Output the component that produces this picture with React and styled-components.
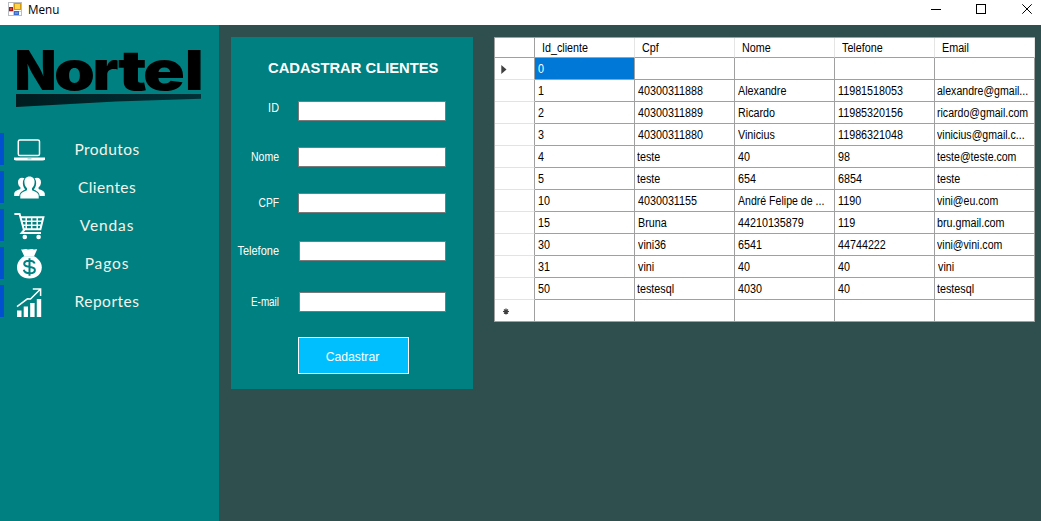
import React from 'react';
import styled, { createGlobalStyle } from 'styled-components';

const GlobalStyle = createGlobalStyle`
  * { box-sizing: border-box; }
  body { margin: 0; overflow: hidden; background: #2f4f4f; font-family: "Liberation Sans", Arial, sans-serif; }
`;

const Window = styled.div`
  display: flex;
  flex-direction: column;
  width: 1041px;
  height: 521px;
  background: #2f4f4f;
`;

const TitleBar = styled.header`
  display: flex;
  flex: none;
  height: 25px;
  padding-left: 8px;
  background: #fff;
`;

const AppIcon = styled.svg`
  margin-top: 2px;
  flex: none;
`;

const Title = styled.span`
  margin-left: 6px;
  flex: 1;
  font: 11.7px/19px "Open Sans", sans-serif;
  color: #000;
`;

const WindowControls = styled.svg`
  flex: none;
`;

const Body = styled.div`
  display: flex;
  flex: 1;
  align-items: flex-start;
`;

const Sidebar = styled.nav`
  width: 219px;
  height: 496px;
  flex: none;
  background: #008080;
`;

const Logo = styled.svg`
  display: block;
`;

const Menu = styled.div`
  display: flex;
  flex-direction: column;
  gap: 6px;
`;

const MenuItem = styled.div`
  display: flex;
  align-items: center;
  height: 32px;
  border-left: 4px solid #0050d0;
`;

const MenuIcon = styled.svg`
  margin-left: 9px;
  flex: none;
`;

const MenuLabel = styled.span`
  width: 130px;
  margin-left: -4px;
  text-align: center;
  font: 15.5px/32px Lato, sans-serif;
  letter-spacing: ${(p) => p.$spacing}px;
  color: #f4f4ec;
`;

const Panel = styled.section`
  width: 242px;
  height: 352px;
  flex: none;
  margin: 12px 0 0 12px;
  padding-top: 22px;
  background: #008080;
`;

const PanelTitle = styled.h1`
  margin: 0 0 24px 37px;
  font-size: 14.75px;
  line-height: 18px;
  font-weight: bold;
  color: #fff;
  white-space: nowrap;
`;

const Field = styled.label`
  display: flex;
  height: 20px;
  margin-bottom: ${(p) => p.$gap}px;
  padding-right: 27px;
`;

const FieldLabel = styled.span`
  flex: 1;
  margin-top: ${(p) => p.$shift}px;
  margin-right: ${(p) => p.$space}px;
  text-align: right;
  font-size: 12.5px;
  line-height: 20px;
  color: #fff;
  transform: scaleX(${(p) => p.$stretch});
  transform-origin: right;
`;

const Input = styled.input`
  width: ${(p) => p.$width}px;
  height: 20px;
  padding: 0 3px;
  border: 1px solid #7a7a7a;
  border-radius: 0;
  background: #fff;
  outline: none;
`;

const SubmitButton = styled.button`
  display: block;
  width: 111px;
  height: 37px;
  margin-left: 67px;
  padding: 3px 2px 0 0;
  border: 1px solid #fff;
  background: #00bfff;
  color: #fff;
  font: 12.2px "Liberation Sans", Arial, sans-serif;
`;

const Grid = styled.table`
  width: 541px;
  flex: none;
  margin: 12px 0 0 21px;
  table-layout: fixed;
  border-collapse: separate;
  border-spacing: 0;
  border: 1px solid #a0a0a0;
  border-width: 1px 0 0 1px;
  background: #fff;
`;

const HeaderCell = styled.th`
  width: ${(p) => p.$width}px;
  height: 20px;
  padding: 1px 0 0 7px;
  border-bottom: 1px solid #a0a0a0;
  border-right: 1px solid ${(p) => (p.$dark ? '#a0a0a0' : '#e5e5e5')};
  text-align: left;
  font-weight: normal;
`;

const RowHeader = styled.td`
  height: 22px;
  padding: 0 0 0 5px;
  border-right: 1px solid #a0a0a0;
  border-bottom: 1px solid ${(p) => (p.$last ? '#a0a0a0' : '#e3e3e3')};
`;

const Marker = styled.svg`
  display: block;
`;

const Cell = styled.td`
  height: 22px;
  padding: 1px 0 0 3px;
  border-right: 1px solid #a0a0a0;
  border-bottom: 1px solid #a0a0a0;
  background: ${(p) => (p.$selected ? '#0078d7' : '#fff')};
  color: ${(p) => (p.$selected ? '#fff' : '#000')};
`;

const CellText = styled.span`
  display: block;
  width: 108px;
  margin-left: ${(p) => (p.$tight ? -1 : 0)}px;
  font-size: 12.5px;
  line-height: 18px;
  white-space: nowrap;
  transform: scaleX(${(p) => (p.$word ? 0.845 : 0.86)});
  transform-origin: left;
`;

const icons = {
  laptop: (
    <g>
      <rect x="5.3" y="6.9" width="21.2" height="15.6" rx="1.6" fill="none" stroke="#fff" strokeWidth="1.5" />
      <path d="M1 24.6H32V26.3Q31.4 27.6 29.6 27.6H3.4Q1.6 27.6 1 26.3Z" fill="#fff" />
      <path d="M14.5 25.4H18.5V26.3H14.5Z" fill="#008080" opacity=".45" />
    </g>
  ),
  people: (
    <g fill="#fff">
      <path d="M11.5 7.2C8 5.6 4.8 7.5 5 11.5C5.1 13.7 6.1 15.5 7.4 16.3V18C4.5 19.1 1.5 20.2 1.2 22.5V25H6.3C6.8 21.3 9.5 20 12.2 18.6C10.3 16.3 9.5 13.5 10 10.3C10.2 9 10.7 8.1 11.5 7.2Z" />
      <path d="M21.5 7.2C25 5.6 28.2 7.5 28 11.5C27.9 13.7 26.9 15.5 25.6 16.3V18C28.5 19.1 31.5 20.2 31.8 22.5V25H26.7C26.2 21.3 23.5 20 20.8 18.6C22.7 16.3 23.5 13.5 23 10.3C22.8 9 22.3 8.1 21.5 7.2Z" />
      <path d="M16.5 5.6C13.2 5.6 11.2 7.9 11.4 11.3C11.5 14 12.5 16 14 17.2V19.3C11 20.7 7.5 21.7 7.3 24.6V27.6H25.7V24.6C25.5 21.7 22 20.7 19 19.3V17.2C20.5 16 21.5 14 21.6 11.3C21.8 7.9 19.8 5.6 16.5 5.6Z" />
    </g>
  ),
  cart: (
    <g fill="none" stroke="#fff">
      <path d="M1.4 5.1H6.6L11 21.2L8.6 24.1H28" strokeWidth="2" />
      <path d="M7.2 8.2H30.4L27.4 20.3H10.6" strokeWidth="2" />
      <path d="M8.3 12.2H29.3M9.4 16.2H28.3M13.2 8V20M18.7 8V20M24.2 8V20" strokeWidth="1.5" />
      <circle cx="11.8" cy="28" r="2.3" fill="#fff" stroke="none" />
      <circle cx="25.6" cy="28" r="2.3" fill="#fff" stroke="none" />
    </g>
  ),
  bag: (
    <g>
      <path d="M8 2.2C10.5 3 12 1.3 14 2.2C16 3.1 18 1.4 20 2.2C21.4 2.9 22.8 2.3 24.2 2.3L20.9 9.6H11.4Z" fill="#fff" />
      <path d="M11 9.3H21.2C25.7 12 28.8 15.7 28.8 20.2C28.8 27.2 23.5 31.4 16.4 31.4C9.2 31.4 4 27.2 4 20.2C4 15.7 6.8 12 11 9.3Z" fill="#fff" />
      <path d="M21.7 16.5C20.9 14.4 19 13.7 16.3 13.7C13.1 13.7 11.2 14.9 11.2 16.9C11.2 21.1 21.9 18.3 21.9 23C21.9 25.1 19.8 26.3 16.7 26.3C13.5 26.3 11.3 25 10.8 22.8M16.5 11.2V28.7" fill="none" stroke="#008080" strokeWidth="2" />
    </g>
  ),
  chart: (
    <g>
      <path d="M4 25.6H8.5V32H4ZM10.7 21.6H15V32H10.7ZM17.2 18H21.6V32H17.2ZM23.8 14H28.2V32H23.8Z" fill="#fff" />
      <path d="M4 21.7L14.4 13.8L17.5 14L26.8 4.7M19.8 3.9H27.6V11" fill="none" stroke="#fff" strokeWidth="1.5" />
    </g>
  ),
};

const menu = [
  { label: 'Produtos', icon: 'laptop', spacing: 0.45 },
  { label: 'Clientes', icon: 'people', spacing: 0.4 },
  { label: 'Vendas', icon: 'cart', spacing: 0.9 },
  { label: 'Pagos', icon: 'bag', spacing: 0.9 },
  { label: 'Reportes', icon: 'chart', spacing: 0.5 },
];

const logoLetters = [
  { char: 'N', x: 14.5, width: 42 },
  { char: 'o', x: 54, width: 41 },
  { char: 'r', x: 92.5, width: 26 },
  { char: 't', x: 118, width: 29 },
  { char: 'e', x: 143, width: 42 },
  { char: 'l', x: 184.8, width: 19 },
];

const fields = [
  { label: 'ID', gap: 26, shift: -3, width: 148, stretch: 0.87 },
  { label: 'Nome', gap: 26, shift: 0, width: 148, stretch: 0.84 },
  { label: 'CPF', gap: 28, shift: 0, width: 148, stretch: 0.82 },
  { label: 'Telefone', gap: 31, shift: 0, width: 147, stretch: 0.88 },
  { label: 'E-mail', gap: 25, shift: 0, width: 147, stretch: 0.79 },
];

const columns = ['Id_cliente', 'Cpf', 'Nome', 'Telefone', 'Email'];

const rows = [
  ['0', '', '', '', ''],
  ['1', '40300311888', 'Alexandre', '11981518053', 'alexandre@gmail...'],
  ['2', '40300311889', 'Ricardo', '11985320156', 'ricardo@gmail.com'],
  ['3', '40300311880', 'Vinicius', '11986321048', 'vinicius@gmail.c...'],
  ['4', 'teste', '40', '98', 'teste@teste.com'],
  ['5', 'teste', '654', '6854', 'teste'],
  ['10', '4030031155', 'André Felipe de ...', '1190', 'vini@eu.com'],
  ['15', 'Bruna', '44210135879', '119', 'bru.gmail.com'],
  ['30', 'vini36', '6541', '44744222', 'vini@vini.com'],
  ['31', 'vini', '40', '40', 'vini'],
  ['50', 'testesql', '4030', '40', 'testesql'],
  ['', '', '', '', ''],
];

function RowMarker({ index }) {
  if (index === 0) {
    return (
      <Marker width="12" height="12">
        <path d="M1.3 2V11L6.5 6.5Z" fill="#404040" />
      </Marker>
    );
  }
  if (index === rows.length - 1) {
    return (
      <Marker width="12" height="12">
        <path d="M6 3.5V9.5M3 6.5H9M4 4.5L8 8.5M8 4.5L4 8.5" stroke="#404040" strokeWidth="1.2" />
      </Marker>
    );
  }
  return null;
}

export default function App() {
  return (
    <Window>
      <GlobalStyle />
      <TitleBar>
        <AppIcon width="14" height="14">
          <rect x=".5" y=".5" width="13" height="13" fill="#fff" stroke="#b9bcc2" />
          <path d="M5.5 1V13M1 9.5H13" stroke="#c8c8c8" />
          <rect x="1.5" y="5.5" width="3" height="3" fill="#d34a3e" stroke="#a01c1c" />
          <rect x="6.5" y="1.5" width="6" height="6" fill="#ffd34d" stroke="#d39a10" />
          <rect x="6.5" y="9.5" width="4" height="3" fill="#5c90ea" stroke="#3c6cc8" />
        </AppIcon>
        <Title>Menu</Title>
        <WindowControls width="141" height="25" viewBox="900 0 141 25" fill="none" stroke="#000">
          <path d="M931 9.5H941" />
          <rect x="976.5" y="4.5" width="9" height="9" />
          <path d="M1022.3 4.3L1031.7 13.7M1031.7 4.3L1022.3 13.7" />
        </WindowControls>
      </TitleBar>
      <Body>
        <Sidebar>
          <Logo width="219" height="108" viewBox="0 25 219 108">
            <defs>
              <linearGradient id="swoosh">
                <stop offset="0" stopColor="#001c20" />
                <stop offset="1" stopColor="#003238" />
              </linearGradient>
            </defs>
            <text y="90" fontFamily="Inter, sans-serif" fontWeight="900" fontSize="55" fill="#000">
              {logoLetters.map((l) => (
                <tspan key={l.char} x={l.x} textLength={l.width} lengthAdjust="spacingAndGlyphs">
                  {l.char}
                </tspan>
              ))}
            </text>
            <path d="M16 94H201V98.7L116 101.5L16 107Z" fill="url(#swoosh)" />
          </Logo>
          <Menu>
            {menu.map((item) => (
              <MenuItem key={item.label}>
                <MenuIcon width="33" height="33">{icons[item.icon]}</MenuIcon>
                <MenuLabel $spacing={item.spacing}>{item.label}</MenuLabel>
              </MenuItem>
            ))}
          </Menu>
        </Sidebar>
        <Panel>
          <PanelTitle>CADASTRAR CLIENTES</PanelTitle>
          {fields.map((f) => (
            <Field key={f.label} $gap={f.gap}>
              <FieldLabel $shift={f.shift} $space={167 - f.width} $stretch={f.stretch}>
                {f.label}
              </FieldLabel>
              <Input $width={f.width} />
            </Field>
          ))}
          <SubmitButton>Cadastrar</SubmitButton>
        </Panel>
        <Grid>
          <thead>
            <tr>
              <HeaderCell $width={40} $dark />
              {columns.map((c) => (
                <HeaderCell key={c} $width={100}>
                  <CellText>{c}</CellText>
                </HeaderCell>
              ))}
            </tr>
          </thead>
          <tbody>
            {rows.map((row, r) => (
              <tr key={r}>
                <RowHeader $last={r === rows.length - 1}>
                  <RowMarker index={r} />
                </RowHeader>
                {row.map((value, c) => (
                  <Cell key={c} $selected={r === 0 && c === 0}>
                    <CellText $word={value.includes('@') || value.endsWith('...')} $tight={/^(t|[a-z].*[.])/.test(value)}>
                      {value}
                    </CellText>
                  </Cell>
                ))}
              </tr>
            ))}
          </tbody>
        </Grid>
      </Body>
    </Window>
  );
}
